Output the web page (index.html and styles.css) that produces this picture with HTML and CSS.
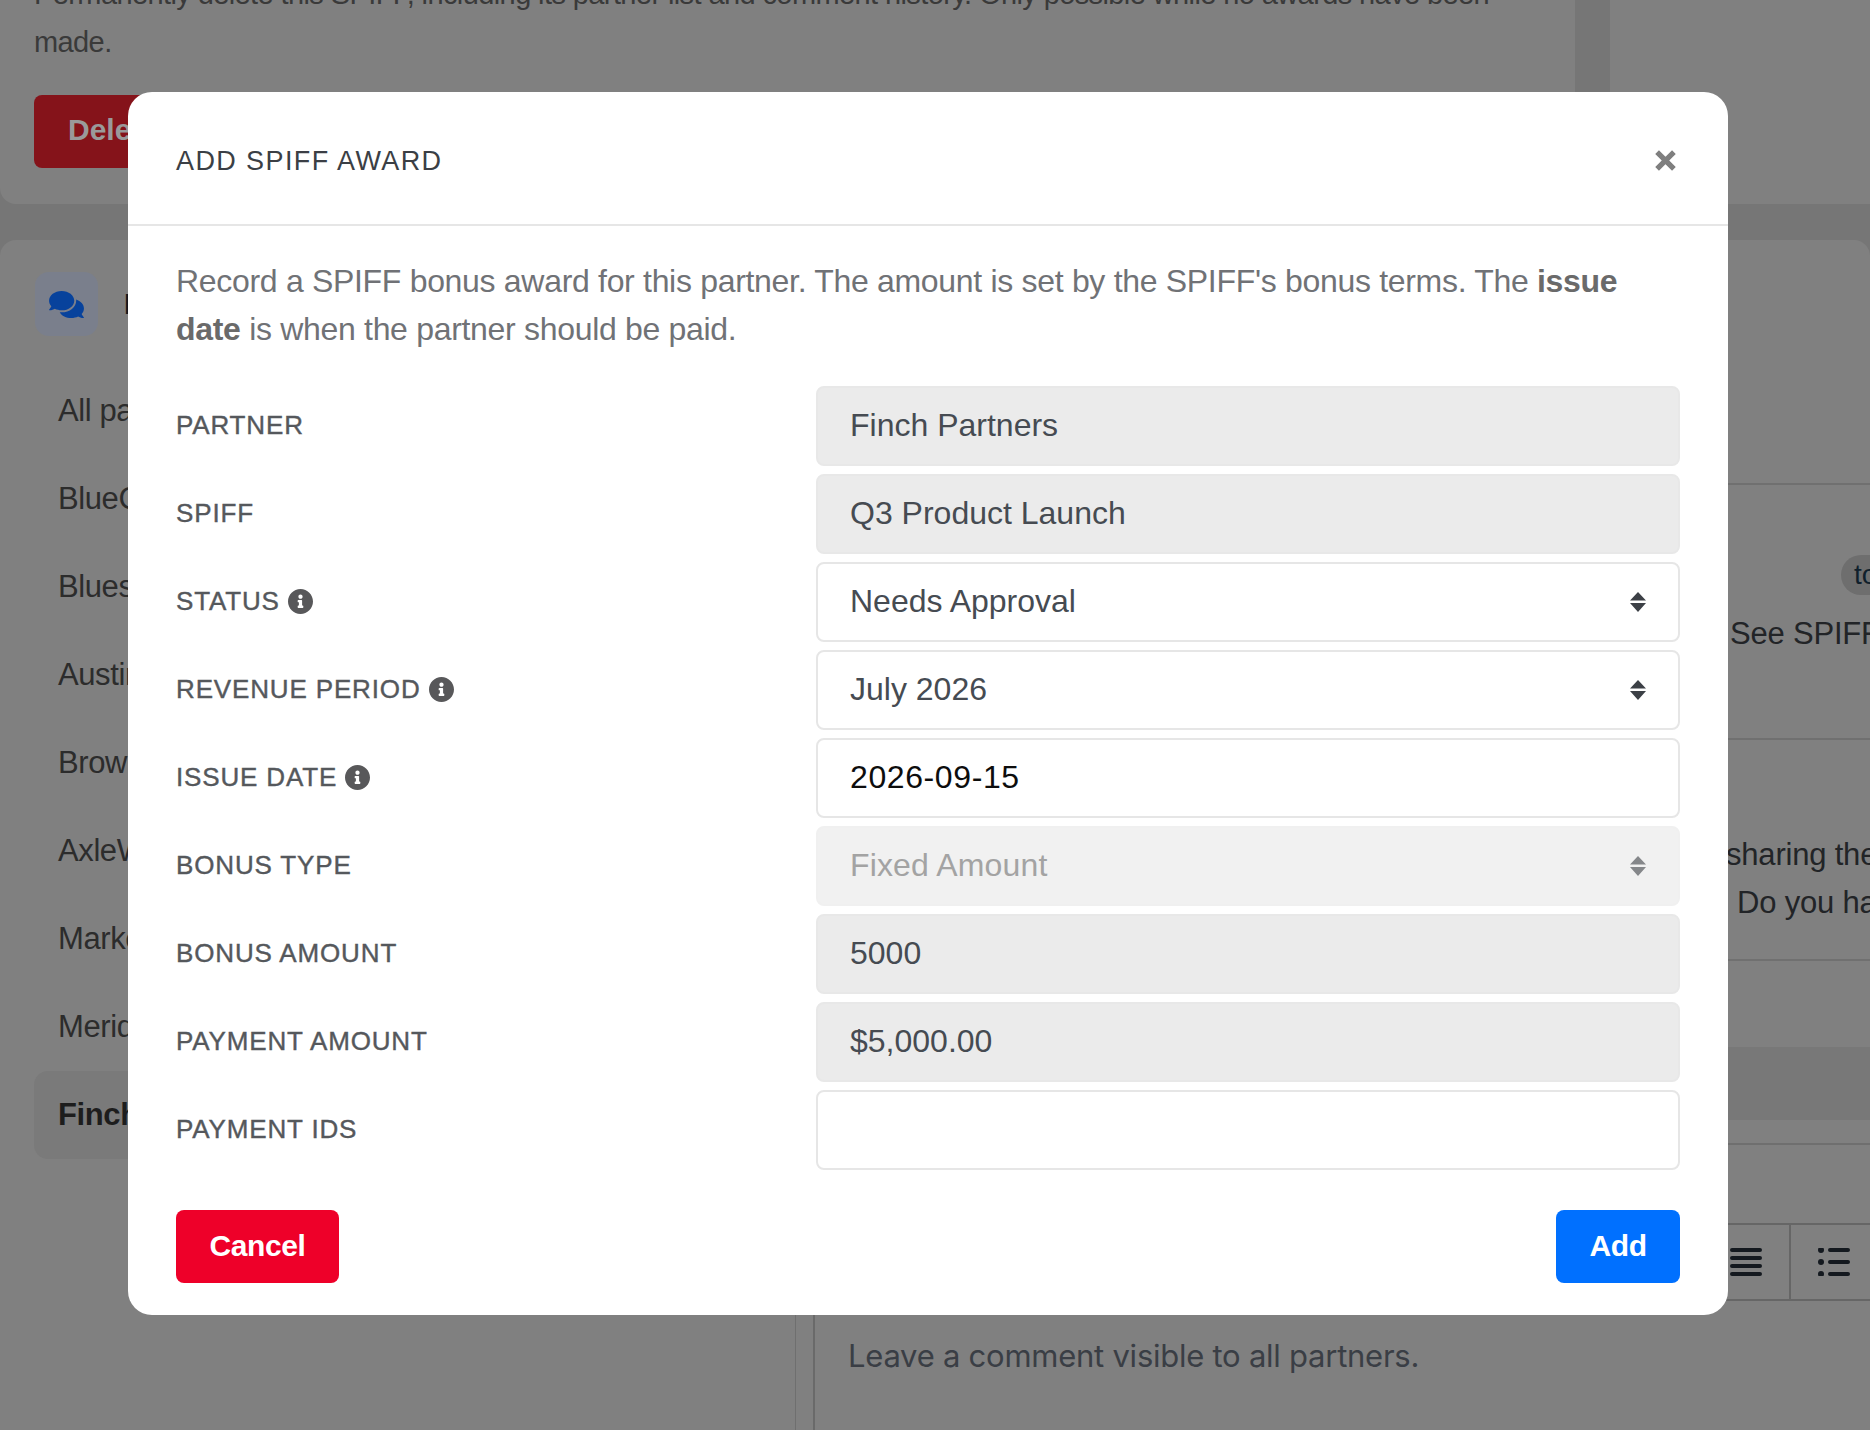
FILE: index.html
```html
<!DOCTYPE html>
<html lang="en">
<head>
<meta charset="utf-8">
<title>Add SPIFF Award</title>
<link rel="stylesheet" href="styles.css">
</head>
<body>
<div class="page">
  <section class="top-row">
    <div class="danger-card">
      <p class="danger-text">Permanently delete this SPIFF, including its partner list and comment history. Only possible while no awards have been made.</p>
      <button class="danger-btn">Delete SPIFF</button>
    </div>
    <div class="side-card"></div>
  </section>
  <section class="comments-card">
    <aside class="partner-col">
      <div class="partner-head">
        <span class="chip">
          <svg class="chip-icon" viewBox="0 0 576 512"><path d="M416 192c0-88.4-93.1-160-208-160S0 103.6 0 192c0 34.3 14.1 65.9 38 92-13.4 30.2-35.5 54.2-35.8 54.5-2.2 2.3-2.8 5.7-1.5 8.7S4.8 352 8 352c36.6 0 66.9-12.3 88.7-25 32.2 15.7 70.3 25 111.3 25 114.9 0 208-71.6 208-160zm122 220c23.9-26 38-57.7 38-92 0-66.9-53.5-124.2-129.3-148.1.9 6.6 1.3 13.3 1.3 20.1 0 105.9-107.7 192-240 192-10.8 0-21.3-.8-31.7-1.9C207.8 439.6 281.8 480 368 480c41 0 79.1-9.2 111.3-25 21.8 12.7 52.1 25 88.7 25 3.2 0 6.1-1.9 7.3-4.8 1.3-2.9.7-6.3-1.5-8.7-.3-.3-22.4-24.2-35.8-54.5z"/></svg>
        </span>
        <h2 class="partner-title">Partner comments</h2>
      </div>
      <ul class="partner-list">
        <li>All partners</li>
        <li>BlueCrest</li>
        <li>Bluestone</li>
        <li>Austin</li>
        <li>Brown</li>
        <li>AxleWorks</li>
        <li>Marketing</li>
        <li>Meridian</li>
        <li class="is-active">Finch Partners</li>
      </ul>
    </aside>
    <div class="thread-col">
      <div class="thread-head"></div>
      <div class="thread-row row-one">
        <span class="tag">to</span>
        <p class="msg">See SPIFF</p>
      </div>
      <div class="thread-row row-two">
        <p class="msg">sharing the</p>
        <p class="msg msg-indent">Do you have</p>
      </div>
      <div class="thread-gap"></div>
      <div class="thread-band"></div>
      <div class="thread-spacer"></div>
      <div class="thread-spacer2"></div>
      <div class="toolbar">
        <span class="tool">
          <svg class="tool-icon" viewBox="0 0 32 28"><path d="M2 2h28M2 10h28M2 18h28M2 26h28"/></svg>
        </span>
        <span class="tool">
          <svg class="tool-icon" viewBox="0 0 32 28"><path d="M12 2h18M12 14h18M12 26h18"/><circle class="dot" cx="3" cy="2" r="3"/><circle class="dot" cx="3" cy="14" r="3"/><circle class="dot" cx="3" cy="26" r="3"/></svg>
        </span>
      </div>
      <div class="editor">Leave a comment visible to all partners.</div>
    </div>
  </section>
</div>

<div class="modal-layer">
  <div class="modal">
    <header class="modal-head">
      <h1 class="modal-title">ADD SPIFF AWARD</h1>
      <svg class="close" viewBox="0 0 20 20"><path d="M2 2l16 16M18 2L2 18"/></svg>
    </header>
    <div class="modal-body">
      <p class="intro">Record a SPIFF bonus award for this partner. The amount is set by the SPIFF's bonus terms. The <b>issue date</b> is when the partner should be paid.</p>
      <div class="form">
        <div class="label">PARTNER</div>
        <div class="field readonly">Finch Partners</div>

        <div class="label">SPIFF</div>
        <div class="field readonly">Q3 Product Launch</div>

        <div class="label">STATUS
          <svg class="info" viewBox="8 8 496 496"><path d="M256 8C119.043 8 8 119.083 8 256c0 136.997 111.043 248 248 248s248-111.003 248-248C504 119.083 392.957 8 256 8zm0 110c23.196 0 42 18.804 42 42s-18.804 42-42 42-42-18.804-42-42 18.804-42 42-42zm56 254c0 6.627-5.373 12-12 12h-88c-6.627 0-12-5.373-12-12v-24c0-6.627 5.373-12 12-12h12v-64h-12c-6.627 0-12-5.373-12-12v-24c0-6.627 5.373-12 12-12h64c6.627 0 12 5.373 12 12v100h12c6.627 0 12 5.373 12 12v24z"/></svg>
        </div>
        <div class="field select">Needs Approval
          <svg class="caret" viewBox="0 0 16 20"><path d="M8 0l8 8.500H0zM0 11h16l-8 9z"/></svg>
        </div>

        <div class="label">REVENUE PERIOD
          <svg class="info" viewBox="8 8 496 496"><path d="M256 8C119.043 8 8 119.083 8 256c0 136.997 111.043 248 248 248s248-111.003 248-248C504 119.083 392.957 8 256 8zm0 110c23.196 0 42 18.804 42 42s-18.804 42-42 42-42-18.804-42-42 18.804-42 42-42zm56 254c0 6.627-5.373 12-12 12h-88c-6.627 0-12-5.373-12-12v-24c0-6.627 5.373-12 12-12h12v-64h-12c-6.627 0-12-5.373-12-12v-24c0-6.627 5.373-12 12-12h64c6.627 0 12 5.373 12 12v100h12c6.627 0 12 5.373 12 12v24z"/></svg>
        </div>
        <div class="field select">July 2026
          <svg class="caret" viewBox="0 0 16 20"><path d="M8 0l8 8.500H0zM0 11h16l-8 9z"/></svg>
        </div>

        <div class="label">ISSUE DATE
          <svg class="info" viewBox="8 8 496 496"><path d="M256 8C119.043 8 8 119.083 8 256c0 136.997 111.043 248 248 248s248-111.003 248-248C504 119.083 392.957 8 256 8zm0 110c23.196 0 42 18.804 42 42s-18.804 42-42 42-42-18.804-42-42 18.804-42 42-42zm56 254c0 6.627-5.373 12-12 12h-88c-6.627 0-12-5.373-12-12v-24c0-6.627 5.373-12 12-12h12v-64h-12c-6.627 0-12-5.373-12-12v-24c0-6.627 5.373-12 12-12h64c6.627 0 12 5.373 12 12v100h12c6.627 0 12 5.373 12 12v24z"/></svg>
        </div>
        <div class="field date">2026-09-15</div>

        <div class="label">BONUS TYPE</div>
        <div class="field select disabled">Fixed Amount
          <svg class="caret" viewBox="0 0 16 20"><path d="M8 0l8 8.500H0zM0 11h16l-8 9z"/></svg>
        </div>

        <div class="label">BONUS AMOUNT</div>
        <div class="field readonly">5000</div>

        <div class="label">PAYMENT AMOUNT</div>
        <div class="field readonly">$5,000.00</div>

        <div class="label">PAYMENT IDS</div>
        <div class="field"></div>
      </div>
      <footer class="modal-foot">
        <button class="btn btn-cancel">Cancel</button>
        <button class="btn btn-add">Add</button>
      </footer>
    </div>
  </div>
</div>
</body>
</html>
```
FILE: styles.css
```css
* { box-sizing: border-box; }
html, body { margin: 0; height: 100%; }
body {
  background: #767676;
  font-family: "Liberation Sans", Arial, sans-serif;
  overflow: hidden;
  position: relative;
}
p, h1, h2, ul { margin: 0; padding: 0; }

/* dimmed page behind the modal */
.page { height: 1430px; overflow: hidden; display: flex; flex-direction: column; gap: 36px; }
.top-row { display: flex; gap: 35px; height: 204px; flex: none; }
.danger-card { width: 1575px; background: #808080; border-radius: 0 0 16px 16px; padding: 0 34px; }
.danger-text { font-size: 29px; line-height: 48px; margin-top: -30px; color: #3a3a3a; letter-spacing: -0.6px; width: 1480px; }
.danger-btn {
  margin-top: 29px; width: 200px; height: 73px; border: 0; border-radius: 8px; padding: 0 0 4px 34px;
  background: #85131a; color: #9a9a9a; font: 700 30px "Liberation Sans", Arial, sans-serif;
  text-align: left; white-space: nowrap;
}
.side-card { flex: 1; background: #808080; }

.comments-card { flex: 1; background: #808080; border-radius: 16px 16px 0 0; display: flex; min-height: 0; }
.partner-col { width: 796px; border-right: 1px solid #6f6f6f; padding: 32px 35px 0; flex: none; }
.partner-head { display: flex; align-items: center; gap: 26px; height: 64px; }
.chip { width: 63px; height: 64px; border-radius: 14px; background: #7a7f8c; display: flex; align-items: center; justify-content: center; }
.chip-icon { width: 35px; height: 31px; fill: #07429c; }
.partner-title { font-size: 29px; font-weight: 700; color: #14181d; white-space: nowrap; }
.partner-list { list-style: none; margin-top: 31px; margin-left: -1px; }
.partner-list li { height: 88px; line-height: 88px; padding-left: 24px; font-size: 31px; color: #2c2c2c; letter-spacing: -0.4px; border-radius: 14px; }
.partner-list .is-active { background: #7a7a7a; font-weight: 700; color: #1d1d1d; }

.thread-col { flex: 1; margin-left: 17px; border-left: 2px solid #6a6a6a; display: flex; flex-direction: column; min-width: 0; }
.thread-head { height: 245px; border-bottom: 2px solid #707070; flex: none; }
.thread-row { flex: none; border-bottom: 2px solid #707070; position: relative; }
.row-one { height: 255px; padding: 125px 0 0 915px; }
.tag { position: absolute; left: 1026px; top: 70px; width: 80px; height: 40px; border-radius: 20px; background: #6e6e6e; color: #10202c; font-size: 28px; line-height: 40px; padding-left: 13px; }
.row-two { height: 221px; padding: 91px 0 0 911px; }
.msg { font-size: 31px; line-height: 48px; color: #222427; white-space: nowrap; letter-spacing: -0.2px; }
.msg-indent { padding-left: 11px; }
.thread-gap { height: 86px; flex: none; }
.thread-band { height: 73px; background: #787878; flex: none; }
.thread-spacer { height: 25px; flex: none; border-bottom: 2px solid #6f6f6f; }
.thread-spacer2 { height: 78px; flex: none; }
.toolbar { height: 78px; flex: none; border-top: 2px solid #666; border-bottom: 2px solid #666; display: flex; justify-content: flex-end; margin-right: -7px; }
.tool { width: 88px; border-left: 2px solid #666; display: flex; align-items: center; justify-content: center; }
.tool-icon { width: 32px; height: 28px; fill: none; stroke: #14191f; stroke-width: 4; stroke-linecap: round; }
.tool-icon .dot { fill: #14191f; stroke: none; }
.editor { padding: 31px 0 0 33px; font: 31px/48px Inter, "Liberation Sans", Arial, sans-serif; color: #3a3e45; letter-spacing: -0.25px; }

/* modal */
.modal-layer { position: absolute; inset: 0 14px 0 0; display: flex; justify-content: center; align-items: flex-start; padding-top: 92px; }
.modal { width: 1600px; height: 1223px; background: #fff; border-radius: 24px; display: flex; flex-direction: column; overflow: hidden; }
.modal-head { height: 134px; flex: none; padding: 5px 52px 0 48px; border-bottom: 2px solid #e6e6e6; display: flex; align-items: center; justify-content: space-between; }
.modal-title { font-size: 27px; font-weight: 400; color: #3b3f45; letter-spacing: 1.4px; padding-top: 2px; }
.close { width: 21px; height: 21px; fill: none; stroke: #7f7f7f; stroke-width: 5; }
.modal-body { padding: 31px 48px 32px; flex: 1; display: flex; flex-direction: column; }
.intro { font-size: 32px; line-height: 48px; color: #707276; letter-spacing: -0.31px; }
.intro b { font-weight: 700; color: #6a6a6a; }
.form { display: grid; grid-template-columns: 640px 864px; grid-auto-rows: 80px; row-gap: 8px; margin-top: 33px; }
.label { display: flex; align-items: center; gap: 8px; font-size: 26px; font-weight: 400; color: #55585c; letter-spacing: 0.85px; padding-bottom: 1px; -webkit-text-stroke: 0.4px #55585c; }
.info { width: 25px; height: 25px; fill: #58585a; flex: none; }
.field { position: relative; display: flex; align-items: center; padding: 0 32px 1px; border: 2px solid #e6e6e6; border-radius: 8px; font-size: 32px; color: #464b52; background: #fff; }
.readonly { background: #ebebeb; border-color: #e8e8e8; }
.date { color: #0d0d0d; letter-spacing: 0.6px; }
.disabled { background: #f1f1f1; border-color: #f0f0f0; color: #a3a3a3; letter-spacing: 0.15px; }
.caret { position: absolute; right: 32px; top: 28px; width: 16px; height: 20px; fill: #3c4046; }
.disabled .caret { fill: #85878a; }
.modal-foot { margin-top: 40px; display: flex; justify-content: space-between; }
.btn { height: 73px; border: 0; border-radius: 8px; padding: 0 0 2px; color: #fff; font: 700 30px "Liberation Sans", Arial, sans-serif; letter-spacing: -0.4px; }
.btn-cancel { width: 163px; background: #ee0029; }
.btn-add { width: 124px; background: #0070ff; }
```
